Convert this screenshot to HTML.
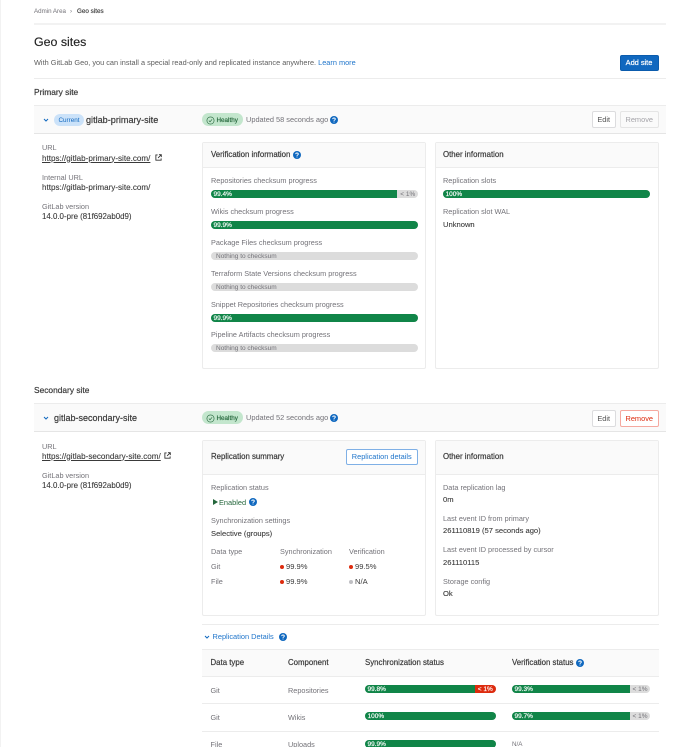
<!DOCTYPE html>
<html><head><meta charset="utf-8"><style>
html,body{margin:0;padding:0;background:#fff;width:700px;height:747px;overflow:hidden}
body{font-family:"Liberation Sans",sans-serif;font-size:7.6px;color:#3a3a3a}
#w{position:relative;width:700px;height:747px;overflow:hidden;background:#fff;filter:blur(.3px)}
.t,.b,.l{position:absolute;white-space:nowrap;line-height:10px;height:10px}
.lb{color:#737278;font-size:7.3px}
.v{color:#3a3a3a;-webkit-text-stroke:.1px #3a3a3a}
.h{color:#3a3a3a;font-size:7.85px;-webkit-text-stroke:.2px #3a3a3a}
.box{position:absolute;box-sizing:border-box}
.card{position:absolute;box-sizing:border-box;border:1px solid #ececec;border-radius:2px;background:#fff}
.card>.hd{position:absolute;left:0;right:0;top:0;background:#fafafa;border-bottom:1px solid #ececec}
.bar{position:absolute;height:8px;border-radius:4px;overflow:hidden;background:#dcdcdc;font-size:6.5px;line-height:9px}
.bar i{position:absolute;top:0;bottom:0;font-style:normal;white-space:nowrap}
.g{background:#108548;color:#fff;left:0;padding-left:2.5px;box-sizing:border-box;-webkit-text-stroke:.15px #fff}
.r{background:#dd2b0e;color:#fff;text-align:center;-webkit-text-stroke:.15px #fff}
.y{color:#737278;text-align:center}
.n{color:#737278;padding-left:5px;left:0}
.btn{position:absolute;box-sizing:border-box;border-radius:2px;text-align:center;font-size:7.4px;background:#fff;border:1px solid #dcdcde;color:#525252}
svg{position:absolute;overflow:visible}
.dot{position:absolute;width:4px;height:4px;border-radius:50%}
</style></head><body><div id="w">
<div class="box" style="left:0;top:0;width:1px;height:747px;background:#f2f2f2"></div>
<svg width="0" height="0" style="position:absolute"><defs>
<symbol id="q" viewBox="0 0 16 16"><circle cx="8" cy="8" r="8" fill="#1068bf"/><path d="M5.400 6.200C5.500 4.700 6.600 4 8 4c1.500 0 2.600.9 2.600 2.200 0 1.900-2.600 1.900-2.600 3.500" fill="none" stroke="#fff" stroke-width="1.800"/><circle cx="8" cy="12" r="1.100" fill="#fff"/></symbol>
<symbol id="c" viewBox="0 0 8 8"><path d="M2 3 4 5 6 3" fill="none" stroke="#1068bf" stroke-width="1"/></symbol>
<symbol id="e" viewBox="0 0 8 8"><path d="M3 1H1v6h6V5M4.500 .8h2.700v2.700M7 1 3.500 4.500" fill="none" stroke="#303030" stroke-width="1"/></symbol>
<symbol id="k" viewBox="0 0 10 10"><circle cx="5" cy="5" r="4" fill="none" stroke="#24663b" stroke-width=".7"/><path d="M3.200 5.100 4.500 6.400 6.800 3.700" fill="none" stroke="#24663b" stroke-width=".7"/></symbol>
</defs></svg>

<div class="t lb" style="left:34px;top:7px;font-size:6.2px">Admin Area</div>
<div class="t lb" style="left:70px;top:7px;font-size:6.2px">›</div>
<div class="t" style="left:77px;top:7px;font-size:6.3px;-webkit-text-stroke:.15px #3a3a3a">Geo sites</div>
<div class="box" style="left:34px;top:23px;width:632px;height:2px;background:#f2f2f2"></div>

<div class="t" style="left:34px;top:37px;font-size:12.4px;color:#1f1f1f;-webkit-text-stroke:.15px #1f1f1f">Geo sites</div>
<div class="t" style="left:34px;top:58px;color:#5e5e5e;font-size:7.35px">With GitLab Geo, you can install a special read-only and replicated instance anywhere. <span style="color:#1f75cb">Learn more</span></div>
<div class="btn" style="left:619.500px;top:54.500px;width:39px;height:16px;line-height:14px;background:#1068bf;border-color:#0b5cad;color:#fff;-webkit-text-stroke:.2px #fff">Add site</div>
<div class="box" style="left:34px;top:78px;width:632px;height:1px;background:#ececec"></div>

<div class="t h" style="left:34px;top:87px;font-size:8.4px">Primary site</div>
<div class="box" style="left:34px;top:105px;width:632px;height:29px;background:#fafafa;border-top:1px solid #ececec;border-bottom:1px solid #e5e5e5"></div>
<svg style="left:42px;top:115.500px" width="8" height="8"><use href="#c"/></svg>
<div class="box" style="left:54px;top:113.500px;width:30px;height:12px;border-radius:6px;background:#cbe2f9;color:#1068bf;text-align:center;line-height:13px;font-size:6.300px">Current</div>
<div class="t h" style="left:86px;top:114.500px;font-size:9.100px">gitlab-primary-site</div>
<div class="box" style="left:202px;top:113px;width:41px;height:13px;border-radius:6.500px;background:#c3e6cd"></div>
<svg style="left:206px;top:115.500px" width="9" height="9"><use href="#k"/></svg>
<div class="t" style="left:216.500px;top:116px;font-size:6.300px;color:#24663b;-webkit-text-stroke:.15px #24663b">Healthy</div>
<div class="t lb" style="left:246px;top:114.500px;font-size:7.400px">Updated 58 seconds ago</div>
<svg style="left:330px;top:115.500px" width="8" height="8"><use href="#q"/></svg>
<div class="btn" style="left:591.500px;top:111px;width:24.500px;height:17px;line-height:15px">Edit</div>
<div class="btn" style="left:620px;top:111px;width:38.500px;height:17px;line-height:15px;background:#fafafa;color:#a4a3a8;border-color:#e5e5e5">Remove</div>

<div class="t lb" style="left:42px;top:142.500px">URL</div>
<div class="t v" style="left:42px;top:153.500px;text-decoration:underline;font-size:8.1px">https://gitlab-primary-site.com/</div>
<svg style="left:155px;top:154px" width="7" height="7"><use href="#e"/></svg>
<div class="t lb" style="left:42px;top:172.500px">Internal URL</div>
<div class="t v" style="left:42px;top:182.500px;font-size:8.1px">https://gitlab-primary-site.com/</div>
<div class="t lb" style="left:42px;top:201.500px">GitLab version</div>
<div class="t v" style="left:42px;top:211.500px;font-size:7.9px">14.0.0-pre (81f692ab0d9)</div>

<div class="card" style="left:202px;top:142px;width:224px;height:227px"><div class="hd" style="height:24px"></div></div>
<div class="t h" style="left:211px;top:149.500px">Verification information</div>
<svg style="left:293px;top:150.500px" width="8" height="8"><use href="#q"/></svg>
<div class="t lb" style="left:211px;top:176px">Repositories checksum progress</div>
<div class="bar" style="left:211px;top:190px;width:206.500px"><i class="g" style="width:186px">99.4%</i><i class="y" style="left:187px;right:0">&lt; 1%</i></div>
<div class="t lb" style="left:211px;top:207px">Wikis checksum progress</div>
<div class="bar" style="left:211px;top:221px;width:206.500px"><i class="g" style="width:100%">99.9%</i></div>
<div class="t lb" style="left:211px;top:238px">Package Files checksum progress</div>
<div class="bar" style="left:211px;top:252px;width:206.500px"><i class="n">Nothing to checksum</i></div>
<div class="t lb" style="left:211px;top:269px">Terraform State Versions checksum progress</div>
<div class="bar" style="left:211px;top:282.500px;width:206.500px"><i class="n">Nothing to checksum</i></div>
<div class="t lb" style="left:211px;top:300px">Snippet Repositories checksum progress</div>
<div class="bar" style="left:211px;top:313.500px;width:206.500px"><i class="g" style="width:100%">99.9%</i></div>
<div class="t lb" style="left:211px;top:330px">Pipeline Artifacts checksum progress</div>
<div class="bar" style="left:211px;top:344px;width:206.500px"><i class="n">Nothing to checksum</i></div>

<div class="card" style="left:434.500px;top:142px;width:224px;height:227px"><div class="hd" style="height:24px"></div></div>
<div class="t h" style="left:443px;top:149.500px">Other information</div>
<div class="t lb" style="left:443px;top:176px">Replication slots</div>
<div class="bar" style="left:443px;top:190px;width:207px"><i class="g" style="width:100%">100%</i></div>
<div class="t lb" style="left:443px;top:207px">Replication slot WAL</div>
<div class="t v" style="left:443px;top:219.500px">Unknown</div>

<div class="t h" style="left:34px;top:385px;font-size:8.4px">Secondary site</div>
<div class="box" style="left:34px;top:403px;width:632px;height:29px;background:#fafafa;border-top:1px solid #ececec;border-bottom:1px solid #e5e5e5"></div>
<svg style="left:42px;top:414px" width="8" height="8"><use href="#c"/></svg>
<div class="t h" style="left:54px;top:412.500px;font-size:9px">gitlab-secondary-site</div>
<div class="box" style="left:202px;top:411px;width:41px;height:13px;border-radius:6.500px;background:#c3e6cd"></div>
<svg style="left:206px;top:413.500px" width="9" height="9"><use href="#k"/></svg>
<div class="t" style="left:216.500px;top:414px;font-size:6.300px;color:#24663b;-webkit-text-stroke:.15px #24663b">Healthy</div>
<div class="t lb" style="left:246px;top:412.500px;font-size:7.400px">Updated 52 seconds ago</div>
<svg style="left:330px;top:413.500px" width="8" height="8"><use href="#q"/></svg>
<div class="btn" style="left:591.500px;top:409.500px;width:24.500px;height:17px;line-height:15px">Edit</div>
<div class="btn" style="left:620px;top:409.500px;width:38.500px;height:17px;line-height:15px;color:#dd2b0e;border-color:#f5a9a0">Remove</div>

<div class="t lb" style="left:42px;top:441.500px">URL</div>
<div class="t v" style="left:42px;top:451.500px;text-decoration:underline;font-size:8.1px">https://gitlab-secondary-site.com/</div>
<svg style="left:163.500px;top:452px" width="7" height="7"><use href="#e"/></svg>
<div class="t lb" style="left:42px;top:470.500px">GitLab version</div>
<div class="t v" style="left:42px;top:480.500px;font-size:7.9px">14.0.0-pre (81f692ab0d9)</div>

<div class="card" style="left:202px;top:440px;width:224px;height:176px"><div class="hd" style="height:33px"></div></div>
<div class="t h" style="left:211px;top:451.500px">Replication summary</div>
<div class="btn" style="left:346px;top:448.500px;width:71.500px;height:16.500px;line-height:14.500px;color:#1f75cb;border-color:#7fb0e6">Replication details</div>
<div class="t lb" style="left:211px;top:482.500px">Replication status</div>
<svg style="left:213px;top:499px" width="5" height="6"><path d="M0 0 5 3 0 6Z" fill="#24663b"/></svg>
<div class="t" style="left:219px;top:497.500px;color:#24663b;font-size:7.4px">Enabled</div>
<svg style="left:248.500px;top:498px" width="8" height="8"><use href="#q"/></svg>
<div class="t lb" style="left:211px;top:515.500px">Synchronization settings</div>
<div class="t v" style="left:211px;top:528.500px">Selective (groups)</div>
<div class="t lb" style="left:211px;top:547px">Data type</div>
<div class="t lb" style="left:280px;top:547px">Synchronization</div>
<div class="t lb" style="left:349px;top:547px">Verification</div>
<div class="t lb" style="left:211px;top:561.500px">Git</div>
<div class="dot" style="left:280px;top:564.500px;background:#dd2b0e"></div>
<div class="t" style="left:286px;top:561.500px">99.9%</div>
<div class="dot" style="left:349px;top:564.500px;background:#dd2b0e"></div>
<div class="t" style="left:355px;top:561.500px">99.5%</div>
<div class="t lb" style="left:211px;top:576.500px">File</div>
<div class="dot" style="left:280px;top:579.500px;background:#dd2b0e"></div>
<div class="t" style="left:286px;top:576.500px">99.9%</div>
<div class="dot" style="left:349px;top:579.500px;background:#bfbfc3"></div>
<div class="t" style="left:355px;top:576.500px">N/A</div>

<div class="card" style="left:434.500px;top:440px;width:224px;height:176px"><div class="hd" style="height:33px"></div></div>
<div class="t h" style="left:443px;top:451.500px">Other information</div>
<div class="t lb" style="left:443px;top:482.500px">Data replication lag</div>
<div class="t v" style="left:443px;top:495px">0m</div>
<div class="t lb" style="left:443px;top:513.500px">Last event ID from primary</div>
<div class="t v" style="left:443px;top:526px">261110819 (57 seconds ago)</div>
<div class="t lb" style="left:443px;top:545px">Last event ID processed by cursor</div>
<div class="t v" style="left:443px;top:557.500px">261110115</div>
<div class="t lb" style="left:443px;top:576.500px">Storage config</div>
<div class="t v" style="left:443px;top:589px">Ok</div>

<div class="box" style="left:202px;top:624px;width:456.500px;height:1px;background:#ececec"></div>
<svg style="left:202.500px;top:632.500px" width="8" height="8"><use href="#c"/></svg>
<div class="t" style="left:212.500px;top:631.500px;color:#1f75cb;font-size:7.4px">Replication Details</div>
<svg style="left:279px;top:632.500px" width="8" height="8"><use href="#q"/></svg>

<div class="box" style="left:202px;top:649px;width:456.500px;height:28px;background:#fafafa;border-top:1px solid #ececec;border-bottom:1px solid #ececec"></div>
<div class="t h" style="left:210.500px;top:658px">Data type</div>
<div class="t h" style="left:288px;top:658px">Component</div>
<div class="t h" style="left:365px;top:658px">Synchronization status</div>
<div class="t h" style="left:512px;top:658px">Verification status</div>
<svg style="left:576px;top:659px" width="8" height="8"><use href="#q"/></svg>

<div class="t lb" style="left:210.500px;top:685.500px">Git</div>
<div class="t lb" style="left:288px;top:685.500px">Repositories</div>
<div class="bar" style="left:365px;top:684.500px;width:130.500px"><i class="g" style="width:110px">99.8%</i><i class="r" style="left:110px;right:0">&lt; 1%</i></div>
<div class="bar" style="left:512px;top:684.500px;width:138px"><i class="g" style="width:118px">99.3%</i><i class="y" style="left:118px;right:0">&lt; 1%</i></div>
<div class="box" style="left:202px;top:703px;width:456.500px;height:1px;background:#ececec"></div>

<div class="t lb" style="left:210.500px;top:712.500px">Git</div>
<div class="t lb" style="left:288px;top:712.500px">Wikis</div>
<div class="bar" style="left:365px;top:712px;width:130.500px"><i class="g" style="width:100%">100%</i></div>
<div class="bar" style="left:512px;top:712px;width:138px"><i class="g" style="width:118px">99.7%</i><i class="y" style="left:118px;right:0">&lt; 1%</i></div>
<div class="box" style="left:202px;top:730.500px;width:456.500px;height:1px;background:#ececec"></div>

<div class="t lb" style="left:210.500px;top:739.500px">File</div>
<div class="t lb" style="left:288px;top:739.500px">Uploads</div>
<div class="bar" style="left:365px;top:739.500px;width:130.500px"><i class="g" style="width:100%">99.9%</i></div>
<div class="t lb" style="left:512px;top:740px;font-size:6.300px">N/A</div>
</div></body></html>
